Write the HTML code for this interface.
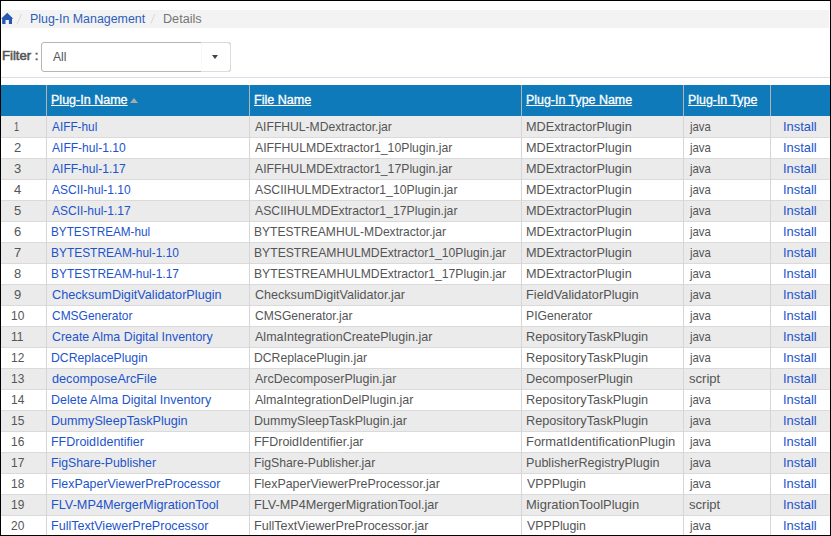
<!DOCTYPE html><html><head><meta charset="utf-8"><style>
*{box-sizing:border-box;margin:0;padding:0}
html,body{width:831px;height:536px;overflow:hidden;background:#fff}
body{position:relative;font-family:"Liberation Sans",sans-serif;color:#555}
.frame{position:absolute;left:0;top:0;width:831px;height:536px;border:1px solid #000;z-index:10}
.bc{position:absolute;left:2px;top:10px;width:827px;height:18px;background:#f3f3f3}
.t{position:absolute;white-space:nowrap;line-height:0;height:0;transform-origin:0 0}
.t::before{content:"";display:inline-block;height:0;vertical-align:baseline}
.home{position:absolute;left:1px;top:13px}
.sel{position:absolute;left:41px;top:42px;width:190px;height:30px;border:1px solid #b5b5b5;border-radius:3px;background:#fff}
.sel .btn{position:absolute;right:-1px;top:-1px;width:30px;height:30px;border:1px solid #dcdcdc;border-left:1px solid #f8f8f8;border-radius:0 3px 3px 0}
.caret{position:absolute;left:170px;top:12px;width:0;height:0;border-left:3.5px solid transparent;border-right:3.5px solid transparent;border-top:4px solid #444}
.hr{position:absolute;left:1px;top:77px;width:829px;height:1px;background:#d8dee6}
.th{position:absolute;left:1px;top:85px;width:829px;height:31px;background:#0f7aba}
.row{position:absolute;left:1px;width:829px;height:21px;border-bottom:1px solid #dadada}
.row.o{background:#ebebeb}
.sep{position:absolute;width:1px;background:#d6d6d6}
.hsep{position:absolute;top:85px;height:31px;width:1px;background:#b4b4b4}
.ul{position:absolute;height:1px;background:#fff}
.arrow{position:absolute;left:130px;top:98px;width:0;height:0;border-left:4px solid transparent;border-right:4px solid transparent;border-bottom:5px solid #a9a9a9}
</style></head><body>
<div class="bc"></div>
<svg style="position:absolute;left:0;top:0" width="30" height="30"><path d="M7.2 12.7 L13.3 18.7 L12 18.7 L12 24 L8.9 24 L8.9 20 L5.5 20 L5.5 24 L2.2 24 L2.2 18.7 L1.1 18.7 Z" fill="#2856b4"/></svg>
<svg style="position:absolute;left:0;top:0" width="831" height="30"><path d="M17.3 23.8 L21.5 14" stroke="#d8d8d8" stroke-width="1"/><path d="M150.8 23.6 L154.8 14.3" stroke="#d8d8d8" stroke-width="1"/></svg>
<div class="t" style="left:29.61px;top:19px;font-size:12.5px;color:#2e5eb8;transform:scaleX(0.9925);">Plug-In Management</div>
<div class="t" style="left:162.79px;top:19px;font-size:12.5px;color:#757575;transform:scaleX(1.0093);">Details</div>
<div class="t" style="left:1.85px;top:56px;font-size:12.5px;color:#555;transform:scaleX(1.0496);-webkit-text-stroke:0.55px #555;">Filter :</div>
<div class="sel"><div class="btn"></div><div class="caret"></div></div>
<div class="t" style="left:53.40px;top:57px;font-size:13px;color:#555;transform:scaleX(0.9341);">All</div>
<div class="hr"></div>
<div class="th"></div>
<div class="t" style="left:50.60px;top:100px;font-size:12.5px;color:#fff;transform:scaleX(1.0017);text-decoration:underline;-webkit-text-stroke:0.3px #fff;">Plug-In Name</div>
<div class="t" style="left:253.79px;top:100px;font-size:12.5px;color:#fff;transform:scaleX(1.0052);text-decoration:underline;-webkit-text-stroke:0.3px #fff;">File Name</div>
<div class="t" style="left:525.51px;top:100px;font-size:12.5px;color:#fff;transform:scaleX(0.9939);text-decoration:underline;-webkit-text-stroke:0.3px #fff;">Plug-In Type Name</div>
<div class="t" style="left:687.61px;top:100px;font-size:12.5px;color:#fff;transform:scaleX(0.9910);text-decoration:underline;-webkit-text-stroke:0.3px #fff;">Plug-In Type</div>
<div class="arrow"></div>
<div class="hsep" style="left:46px"></div>
<div class="hsep" style="left:249px"></div>
<div class="hsep" style="left:521px"></div>
<div class="hsep" style="left:683px"></div>
<div class="hsep" style="left:770px"></div>
<div class="row o" style="top:116px;height:22px"><div class="sep" style="left:45px;top:0;height:22px"></div><div class="sep" style="left:248px;top:0;height:22px"></div><div class="sep" style="left:520px;top:0;height:22px"></div><div class="sep" style="left:682px;top:0;height:22px"></div><div class="sep" style="left:769px;top:0;height:22px"></div></div>
<div class="row" style="top:138px;height:21px"><div class="sep" style="left:45px;top:0;height:21px"></div><div class="sep" style="left:248px;top:0;height:21px"></div><div class="sep" style="left:520px;top:0;height:21px"></div><div class="sep" style="left:682px;top:0;height:21px"></div><div class="sep" style="left:769px;top:0;height:21px"></div></div>
<div class="row o" style="top:159px;height:21px"><div class="sep" style="left:45px;top:0;height:21px"></div><div class="sep" style="left:248px;top:0;height:21px"></div><div class="sep" style="left:520px;top:0;height:21px"></div><div class="sep" style="left:682px;top:0;height:21px"></div><div class="sep" style="left:769px;top:0;height:21px"></div></div>
<div class="row" style="top:180px;height:21px"><div class="sep" style="left:45px;top:0;height:21px"></div><div class="sep" style="left:248px;top:0;height:21px"></div><div class="sep" style="left:520px;top:0;height:21px"></div><div class="sep" style="left:682px;top:0;height:21px"></div><div class="sep" style="left:769px;top:0;height:21px"></div></div>
<div class="row o" style="top:201px;height:21px"><div class="sep" style="left:45px;top:0;height:21px"></div><div class="sep" style="left:248px;top:0;height:21px"></div><div class="sep" style="left:520px;top:0;height:21px"></div><div class="sep" style="left:682px;top:0;height:21px"></div><div class="sep" style="left:769px;top:0;height:21px"></div></div>
<div class="row" style="top:222px;height:21px"><div class="sep" style="left:45px;top:0;height:21px"></div><div class="sep" style="left:248px;top:0;height:21px"></div><div class="sep" style="left:520px;top:0;height:21px"></div><div class="sep" style="left:682px;top:0;height:21px"></div><div class="sep" style="left:769px;top:0;height:21px"></div></div>
<div class="row o" style="top:243px;height:21px"><div class="sep" style="left:45px;top:0;height:21px"></div><div class="sep" style="left:248px;top:0;height:21px"></div><div class="sep" style="left:520px;top:0;height:21px"></div><div class="sep" style="left:682px;top:0;height:21px"></div><div class="sep" style="left:769px;top:0;height:21px"></div></div>
<div class="row" style="top:264px;height:21px"><div class="sep" style="left:45px;top:0;height:21px"></div><div class="sep" style="left:248px;top:0;height:21px"></div><div class="sep" style="left:520px;top:0;height:21px"></div><div class="sep" style="left:682px;top:0;height:21px"></div><div class="sep" style="left:769px;top:0;height:21px"></div></div>
<div class="row o" style="top:285px;height:21px"><div class="sep" style="left:45px;top:0;height:21px"></div><div class="sep" style="left:248px;top:0;height:21px"></div><div class="sep" style="left:520px;top:0;height:21px"></div><div class="sep" style="left:682px;top:0;height:21px"></div><div class="sep" style="left:769px;top:0;height:21px"></div></div>
<div class="row" style="top:306px;height:21px"><div class="sep" style="left:45px;top:0;height:21px"></div><div class="sep" style="left:248px;top:0;height:21px"></div><div class="sep" style="left:520px;top:0;height:21px"></div><div class="sep" style="left:682px;top:0;height:21px"></div><div class="sep" style="left:769px;top:0;height:21px"></div></div>
<div class="row o" style="top:327px;height:21px"><div class="sep" style="left:45px;top:0;height:21px"></div><div class="sep" style="left:248px;top:0;height:21px"></div><div class="sep" style="left:520px;top:0;height:21px"></div><div class="sep" style="left:682px;top:0;height:21px"></div><div class="sep" style="left:769px;top:0;height:21px"></div></div>
<div class="row" style="top:348px;height:21px"><div class="sep" style="left:45px;top:0;height:21px"></div><div class="sep" style="left:248px;top:0;height:21px"></div><div class="sep" style="left:520px;top:0;height:21px"></div><div class="sep" style="left:682px;top:0;height:21px"></div><div class="sep" style="left:769px;top:0;height:21px"></div></div>
<div class="row o" style="top:369px;height:21px"><div class="sep" style="left:45px;top:0;height:21px"></div><div class="sep" style="left:248px;top:0;height:21px"></div><div class="sep" style="left:520px;top:0;height:21px"></div><div class="sep" style="left:682px;top:0;height:21px"></div><div class="sep" style="left:769px;top:0;height:21px"></div></div>
<div class="row" style="top:390px;height:21px"><div class="sep" style="left:45px;top:0;height:21px"></div><div class="sep" style="left:248px;top:0;height:21px"></div><div class="sep" style="left:520px;top:0;height:21px"></div><div class="sep" style="left:682px;top:0;height:21px"></div><div class="sep" style="left:769px;top:0;height:21px"></div></div>
<div class="row o" style="top:411px;height:21px"><div class="sep" style="left:45px;top:0;height:21px"></div><div class="sep" style="left:248px;top:0;height:21px"></div><div class="sep" style="left:520px;top:0;height:21px"></div><div class="sep" style="left:682px;top:0;height:21px"></div><div class="sep" style="left:769px;top:0;height:21px"></div></div>
<div class="row" style="top:432px;height:21px"><div class="sep" style="left:45px;top:0;height:21px"></div><div class="sep" style="left:248px;top:0;height:21px"></div><div class="sep" style="left:520px;top:0;height:21px"></div><div class="sep" style="left:682px;top:0;height:21px"></div><div class="sep" style="left:769px;top:0;height:21px"></div></div>
<div class="row o" style="top:453px;height:21px"><div class="sep" style="left:45px;top:0;height:21px"></div><div class="sep" style="left:248px;top:0;height:21px"></div><div class="sep" style="left:520px;top:0;height:21px"></div><div class="sep" style="left:682px;top:0;height:21px"></div><div class="sep" style="left:769px;top:0;height:21px"></div></div>
<div class="row" style="top:474px;height:21px"><div class="sep" style="left:45px;top:0;height:21px"></div><div class="sep" style="left:248px;top:0;height:21px"></div><div class="sep" style="left:520px;top:0;height:21px"></div><div class="sep" style="left:682px;top:0;height:21px"></div><div class="sep" style="left:769px;top:0;height:21px"></div></div>
<div class="row o" style="top:495px;height:21px"><div class="sep" style="left:45px;top:0;height:21px"></div><div class="sep" style="left:248px;top:0;height:21px"></div><div class="sep" style="left:520px;top:0;height:21px"></div><div class="sep" style="left:682px;top:0;height:21px"></div><div class="sep" style="left:769px;top:0;height:21px"></div></div>
<div class="row" style="top:516px;height:21px"><div class="sep" style="left:45px;top:0;height:21px"></div><div class="sep" style="left:248px;top:0;height:21px"></div><div class="sep" style="left:520px;top:0;height:21px"></div><div class="sep" style="left:682px;top:0;height:21px"></div><div class="sep" style="left:769px;top:0;height:21px"></div></div>
<div class="t" style="left:14.30px;top:127px;font-size:13px;color:#555;transform:scaleX(0.7000);">1</div>
<div class="t" style="left:51.90px;top:127px;font-size:13px;color:#1c54cc;transform:scaleX(0.9088);">AIFF-hul</div>
<div class="t" style="left:255.00px;top:127px;font-size:13px;color:#555;transform:scaleX(0.9335);">AIFFHUL-MDextractor.jar</div>
<div class="t" style="left:525.82px;top:127px;font-size:13px;color:#555;transform:scaleX(0.9754);">MDExtractorPlugin</div>
<div class="t" style="left:689.57px;top:127px;font-size:13px;color:#555;transform:scaleX(0.8744);">java</div>
<div class="t" style="left:782.91px;top:127px;font-size:13px;color:#1c54cc;transform:scaleX(0.9918);">Install</div>
<div class="t" style="left:13.90px;top:148px;font-size:13px;color:#555;transform:scaleX(1.0000);">2</div>
<div class="t" style="left:51.90px;top:148px;font-size:13px;color:#1c54cc;transform:scaleX(0.9263);">AIFF-hul-1.10</div>
<div class="t" style="left:255.00px;top:148px;font-size:13px;color:#555;transform:scaleX(0.9415);">AIFFHULMDExtractor1_10Plugin.jar</div>
<div class="t" style="left:525.82px;top:148px;font-size:13px;color:#555;transform:scaleX(0.9754);">MDExtractorPlugin</div>
<div class="t" style="left:689.57px;top:148px;font-size:13px;color:#555;transform:scaleX(0.8744);">java</div>
<div class="t" style="left:782.91px;top:148px;font-size:13px;color:#1c54cc;transform:scaleX(0.9918);">Install</div>
<div class="t" style="left:13.90px;top:169px;font-size:13px;color:#555;transform:scaleX(1.0000);">3</div>
<div class="t" style="left:51.90px;top:169px;font-size:13px;color:#1c54cc;transform:scaleX(0.9263);">AIFF-hul-1.17</div>
<div class="t" style="left:255.00px;top:169px;font-size:13px;color:#555;transform:scaleX(0.9415);">AIFFHULMDExtractor1_17Plugin.jar</div>
<div class="t" style="left:525.82px;top:169px;font-size:13px;color:#555;transform:scaleX(0.9754);">MDExtractorPlugin</div>
<div class="t" style="left:689.57px;top:169px;font-size:13px;color:#555;transform:scaleX(0.8744);">java</div>
<div class="t" style="left:782.91px;top:169px;font-size:13px;color:#1c54cc;transform:scaleX(0.9918);">Install</div>
<div class="t" style="left:13.90px;top:190px;font-size:13px;color:#555;transform:scaleX(1.0000);">4</div>
<div class="t" style="left:51.90px;top:190px;font-size:13px;color:#1c54cc;transform:scaleX(0.9232);">ASCII-hul-1.10</div>
<div class="t" style="left:255.00px;top:190px;font-size:13px;color:#555;transform:scaleX(0.9404);">ASCIIHULMDExtractor1_10Plugin.jar</div>
<div class="t" style="left:525.82px;top:190px;font-size:13px;color:#555;transform:scaleX(0.9754);">MDExtractorPlugin</div>
<div class="t" style="left:689.57px;top:190px;font-size:13px;color:#555;transform:scaleX(0.8744);">java</div>
<div class="t" style="left:782.91px;top:190px;font-size:13px;color:#1c54cc;transform:scaleX(0.9918);">Install</div>
<div class="t" style="left:13.90px;top:211px;font-size:13px;color:#555;transform:scaleX(1.0000);">5</div>
<div class="t" style="left:51.90px;top:211px;font-size:13px;color:#1c54cc;transform:scaleX(0.9232);">ASCII-hul-1.17</div>
<div class="t" style="left:255.00px;top:211px;font-size:13px;color:#555;transform:scaleX(0.9404);">ASCIIHULMDExtractor1_17Plugin.jar</div>
<div class="t" style="left:525.82px;top:211px;font-size:13px;color:#555;transform:scaleX(0.9754);">MDExtractorPlugin</div>
<div class="t" style="left:689.57px;top:211px;font-size:13px;color:#555;transform:scaleX(0.8744);">java</div>
<div class="t" style="left:782.91px;top:211px;font-size:13px;color:#1c54cc;transform:scaleX(0.9918);">Install</div>
<div class="t" style="left:13.90px;top:232px;font-size:13px;color:#555;transform:scaleX(1.0000);">6</div>
<div class="t" style="left:51.00px;top:232px;font-size:13px;color:#1c54cc;transform:scaleX(0.9035);">BYTESTREAM-hul</div>
<div class="t" style="left:254.07px;top:232px;font-size:13px;color:#555;transform:scaleX(0.9294);">BYTESTREAMHUL-MDextractor.jar</div>
<div class="t" style="left:525.82px;top:232px;font-size:13px;color:#555;transform:scaleX(0.9754);">MDExtractorPlugin</div>
<div class="t" style="left:689.57px;top:232px;font-size:13px;color:#555;transform:scaleX(0.8744);">java</div>
<div class="t" style="left:782.91px;top:232px;font-size:13px;color:#1c54cc;transform:scaleX(0.9918);">Install</div>
<div class="t" style="left:13.90px;top:253px;font-size:13px;color:#555;transform:scaleX(1.0000);">7</div>
<div class="t" style="left:50.98px;top:253px;font-size:13px;color:#1c54cc;transform:scaleX(0.9175);">BYTESTREAM-hul-1.10</div>
<div class="t" style="left:254.06px;top:253px;font-size:13px;color:#555;transform:scaleX(0.9352);">BYTESTREAMHULMDExtractor1_10Plugin.jar</div>
<div class="t" style="left:525.82px;top:253px;font-size:13px;color:#555;transform:scaleX(0.9754);">MDExtractorPlugin</div>
<div class="t" style="left:689.57px;top:253px;font-size:13px;color:#555;transform:scaleX(0.8744);">java</div>
<div class="t" style="left:782.91px;top:253px;font-size:13px;color:#1c54cc;transform:scaleX(0.9918);">Install</div>
<div class="t" style="left:13.90px;top:274px;font-size:13px;color:#555;transform:scaleX(1.0000);">8</div>
<div class="t" style="left:50.98px;top:274px;font-size:13px;color:#1c54cc;transform:scaleX(0.9175);">BYTESTREAM-hul-1.17</div>
<div class="t" style="left:254.06px;top:274px;font-size:13px;color:#555;transform:scaleX(0.9352);">BYTESTREAMHULMDExtractor1_17Plugin.jar</div>
<div class="t" style="left:525.82px;top:274px;font-size:13px;color:#555;transform:scaleX(0.9754);">MDExtractorPlugin</div>
<div class="t" style="left:689.57px;top:274px;font-size:13px;color:#555;transform:scaleX(0.8744);">java</div>
<div class="t" style="left:782.91px;top:274px;font-size:13px;color:#1c54cc;transform:scaleX(0.9918);">Install</div>
<div class="t" style="left:13.90px;top:295px;font-size:13px;color:#555;transform:scaleX(1.0000);">9</div>
<div class="t" style="left:51.90px;top:295px;font-size:13px;color:#1c54cc;transform:scaleX(0.9754);">ChecksumDigitValidatorPlugin</div>
<div class="t" style="left:255.00px;top:295px;font-size:13px;color:#555;transform:scaleX(0.9668);">ChecksumDigitValidator.jar</div>
<div class="t" style="left:525.82px;top:295px;font-size:13px;color:#555;transform:scaleX(0.9830);">FieldValidatorPlugin</div>
<div class="t" style="left:689.57px;top:295px;font-size:13px;color:#555;transform:scaleX(0.8744);">java</div>
<div class="t" style="left:782.91px;top:295px;font-size:13px;color:#1c54cc;transform:scaleX(0.9918);">Install</div>
<div class="t" style="left:10.70px;top:316px;font-size:13px;color:#555;transform:scaleX(0.9200);">10</div>
<div class="t" style="left:51.90px;top:316px;font-size:13px;color:#1c54cc;transform:scaleX(0.9206);">CMSGenerator</div>
<div class="t" style="left:255.00px;top:316px;font-size:13px;color:#555;transform:scaleX(0.9305);">CMSGenerator.jar</div>
<div class="t" style="left:525.86px;top:316px;font-size:13px;color:#555;transform:scaleX(0.9378);">PIGenerator</div>
<div class="t" style="left:689.57px;top:316px;font-size:13px;color:#555;transform:scaleX(0.8744);">java</div>
<div class="t" style="left:782.91px;top:316px;font-size:13px;color:#1c54cc;transform:scaleX(0.9918);">Install</div>
<div class="t" style="left:10.70px;top:337px;font-size:13px;color:#555;transform:scaleX(0.9200);">11</div>
<div class="t" style="left:51.90px;top:337px;font-size:13px;color:#1c54cc;transform:scaleX(0.9542);">Create Alma Digital Inventory</div>
<div class="t" style="left:255.00px;top:337px;font-size:13px;color:#555;transform:scaleX(0.9625);">AlmaIntegrationCreatePlugin.jar</div>
<div class="t" style="left:525.82px;top:337px;font-size:13px;color:#555;transform:scaleX(0.9768);">RepositoryTaskPlugin</div>
<div class="t" style="left:689.57px;top:337px;font-size:13px;color:#555;transform:scaleX(0.8744);">java</div>
<div class="t" style="left:782.91px;top:337px;font-size:13px;color:#1c54cc;transform:scaleX(0.9918);">Install</div>
<div class="t" style="left:10.70px;top:358px;font-size:13px;color:#555;transform:scaleX(0.9200);">12</div>
<div class="t" style="left:50.96px;top:358px;font-size:13px;color:#1c54cc;transform:scaleX(0.9420);">DCReplacePlugin</div>
<div class="t" style="left:254.06px;top:358px;font-size:13px;color:#555;transform:scaleX(0.9365);">DCReplacePlugin.jar</div>
<div class="t" style="left:525.82px;top:358px;font-size:13px;color:#555;transform:scaleX(0.9768);">RepositoryTaskPlugin</div>
<div class="t" style="left:689.57px;top:358px;font-size:13px;color:#555;transform:scaleX(0.8744);">java</div>
<div class="t" style="left:782.91px;top:358px;font-size:13px;color:#1c54cc;transform:scaleX(0.9918);">Install</div>
<div class="t" style="left:10.70px;top:379px;font-size:13px;color:#555;transform:scaleX(0.9200);">13</div>
<div class="t" style="left:51.90px;top:379px;font-size:13px;color:#1c54cc;transform:scaleX(0.9728);">decomposeArcFile</div>
<div class="t" style="left:255.00px;top:379px;font-size:13px;color:#555;transform:scaleX(0.9597);">ArcDecomposerPlugin.jar</div>
<div class="t" style="left:525.83px;top:379px;font-size:13px;color:#555;transform:scaleX(0.9733);">DecomposerPlugin</div>
<div class="t" style="left:688.70px;top:379px;font-size:13px;color:#555;transform:scaleX(1.0049);">script</div>
<div class="t" style="left:782.91px;top:379px;font-size:13px;color:#1c54cc;transform:scaleX(0.9918);">Install</div>
<div class="t" style="left:10.70px;top:400px;font-size:13px;color:#555;transform:scaleX(0.9200);">14</div>
<div class="t" style="left:50.94px;top:400px;font-size:13px;color:#1c54cc;transform:scaleX(0.9597);">Delete Alma Digital Inventory</div>
<div class="t" style="left:255.00px;top:400px;font-size:13px;color:#555;transform:scaleX(0.9618);">AlmaIntegrationDelPlugin.jar</div>
<div class="t" style="left:525.82px;top:400px;font-size:13px;color:#555;transform:scaleX(0.9768);">RepositoryTaskPlugin</div>
<div class="t" style="left:689.57px;top:400px;font-size:13px;color:#555;transform:scaleX(0.8744);">java</div>
<div class="t" style="left:782.91px;top:400px;font-size:13px;color:#1c54cc;transform:scaleX(0.9918);">Install</div>
<div class="t" style="left:10.70px;top:421px;font-size:13px;color:#555;transform:scaleX(0.9200);">15</div>
<div class="t" style="left:50.93px;top:421px;font-size:13px;color:#1c54cc;transform:scaleX(0.9695);">DummySleepTaskPlugin</div>
<div class="t" style="left:254.04px;top:421px;font-size:13px;color:#555;transform:scaleX(0.9614);">DummySleepTaskPlugin.jar</div>
<div class="t" style="left:525.82px;top:421px;font-size:13px;color:#555;transform:scaleX(0.9768);">RepositoryTaskPlugin</div>
<div class="t" style="left:689.57px;top:421px;font-size:13px;color:#555;transform:scaleX(0.8744);">java</div>
<div class="t" style="left:782.91px;top:421px;font-size:13px;color:#1c54cc;transform:scaleX(0.9918);">Install</div>
<div class="t" style="left:10.70px;top:442px;font-size:13px;color:#555;transform:scaleX(0.9200);">16</div>
<div class="t" style="left:50.94px;top:442px;font-size:13px;color:#1c54cc;transform:scaleX(0.9598);">FFDroidIdentifier</div>
<div class="t" style="left:254.04px;top:442px;font-size:13px;color:#555;transform:scaleX(0.9594);">FFDroidIdentifier.jar</div>
<div class="t" style="left:525.81px;top:442px;font-size:13px;color:#555;transform:scaleX(0.9928);">FormatIdentificationPlugin</div>
<div class="t" style="left:689.57px;top:442px;font-size:13px;color:#555;transform:scaleX(0.8744);">java</div>
<div class="t" style="left:782.91px;top:442px;font-size:13px;color:#1c54cc;transform:scaleX(0.9918);">Install</div>
<div class="t" style="left:10.70px;top:463px;font-size:13px;color:#555;transform:scaleX(0.9200);">17</div>
<div class="t" style="left:50.96px;top:463px;font-size:13px;color:#1c54cc;transform:scaleX(0.9437);">FigShare-Publisher</div>
<div class="t" style="left:254.06px;top:463px;font-size:13px;color:#555;transform:scaleX(0.9424);">FigShare-Publisher.jar</div>
<div class="t" style="left:525.83px;top:463px;font-size:13px;color:#555;transform:scaleX(0.9672);">PublisherRegistryPlugin</div>
<div class="t" style="left:689.57px;top:463px;font-size:13px;color:#555;transform:scaleX(0.8744);">java</div>
<div class="t" style="left:782.91px;top:463px;font-size:13px;color:#1c54cc;transform:scaleX(0.9918);">Install</div>
<div class="t" style="left:10.70px;top:484px;font-size:13px;color:#555;transform:scaleX(0.9200);">18</div>
<div class="t" style="left:50.95px;top:484px;font-size:13px;color:#1c54cc;transform:scaleX(0.9544);">FlexPaperViewerPreProcessor</div>
<div class="t" style="left:254.05px;top:484px;font-size:13px;color:#555;transform:scaleX(0.9537);">FlexPaperViewerPreProcessor.jar</div>
<div class="t" style="left:526.80px;top:484px;font-size:13px;color:#555;transform:scaleX(0.9480);">VPPPlugin</div>
<div class="t" style="left:689.57px;top:484px;font-size:13px;color:#555;transform:scaleX(0.8744);">java</div>
<div class="t" style="left:782.91px;top:484px;font-size:13px;color:#1c54cc;transform:scaleX(0.9918);">Install</div>
<div class="t" style="left:10.70px;top:505px;font-size:13px;color:#555;transform:scaleX(0.9200);">19</div>
<div class="t" style="left:50.92px;top:505px;font-size:13px;color:#1c54cc;transform:scaleX(0.9759);">FLV-MP4MergerMigrationTool</div>
<div class="t" style="left:254.03px;top:505px;font-size:13px;color:#555;transform:scaleX(0.9723);">FLV-MP4MergerMigrationTool.jar</div>
<div class="t" style="left:525.80px;top:505px;font-size:13px;color:#555;transform:scaleX(0.9971);">MigrationToolPlugin</div>
<div class="t" style="left:688.70px;top:505px;font-size:13px;color:#555;transform:scaleX(1.0049);">script</div>
<div class="t" style="left:782.91px;top:505px;font-size:13px;color:#1c54cc;transform:scaleX(0.9918);">Install</div>
<div class="t" style="left:10.70px;top:526px;font-size:13px;color:#555;transform:scaleX(0.9200);">20</div>
<div class="t" style="left:50.94px;top:526px;font-size:13px;color:#1c54cc;transform:scaleX(0.9649);">FullTextViewerPreProcessor</div>
<div class="t" style="left:254.03px;top:526px;font-size:13px;color:#555;transform:scaleX(0.9669);">FullTextViewerPreProcessor.jar</div>
<div class="t" style="left:526.80px;top:526px;font-size:13px;color:#555;transform:scaleX(0.9480);">VPPPlugin</div>
<div class="t" style="left:689.57px;top:526px;font-size:13px;color:#555;transform:scaleX(0.8744);">java</div>
<div class="t" style="left:782.91px;top:526px;font-size:13px;color:#1c54cc;transform:scaleX(0.9918);">Install</div>
<div class="frame"></div>
</body></html>
